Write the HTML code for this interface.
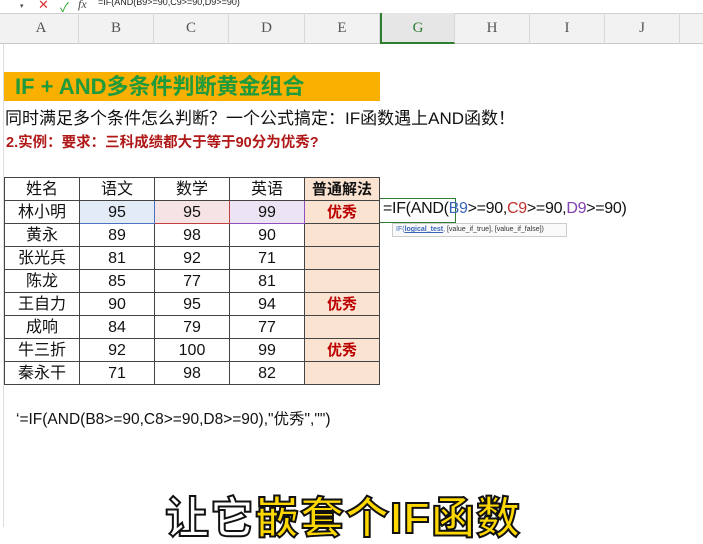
<!DOCTYPE html>
<html><head><meta charset="utf-8"><style>
*{margin:0;padding:0;box-sizing:border-box}
body{width:703px;height:527px;overflow:hidden;background:#fff;position:relative;font-family:"Liberation Sans","Noto Sans CJK SC",sans-serif}
.abs{position:absolute}
.hdr{top:13px;height:31px;background:#f2f2f2;border-top:1px solid #cfcfcf;border-bottom:1px solid #c8c8c8;left:0;width:703px}
.col{position:absolute;top:13px;height:31px;line-height:31px;text-align:center;font-family:"Liberation Serif",serif;font-size:15px;color:#555;border-right:1px solid #d8d8d8}
table{position:absolute;left:4px;top:177px;border-collapse:collapse;table-layout:fixed}
tr{height:23px}
td{width:75px;height:23px;line-height:21px;border:1px solid #444;text-align:center;font-size:16px;color:#111;padding:0;overflow:hidden}
td.e{background:#fbe3d2;color:#b00;font-weight:bold;font-size:15px}
</style></head><body>
<div class="abs" style="left:0;top:0;width:703px;height:12px;background:#fff"></div>
<div class="abs" style="left:20px;top:2px;font-size:7px;color:#444">▾</div>
<div class="abs" style="left:38px;top:-3px;font-size:13px;color:#d33">✕</div>
<div class="abs" style="left:60px;top:-3px;font-size:13px;color:#3a3">✓</div>
<div class="abs" style="left:78px;top:-3px;font-size:12px;font-style:italic;font-family:'Liberation Serif',serif;color:#444">fx</div>
<div class="abs" style="left:98px;top:-3px;font-size:9px;color:#222">=IF(AND(B9&gt;=90,C9&gt;=90,D9&gt;=90)</div>
<div class="abs hdr"></div>
<div class="col" style="left:4px;width:75px">A</div>
<div class="col" style="left:79px;width:75px">B</div>
<div class="col" style="left:154px;width:75px">C</div>
<div class="col" style="left:229px;width:76px">D</div>
<div class="col" style="left:305px;width:75px">E</div>
<div class="col" style="left:380px;width:75px;background:#e6e6e6;border-left:2px solid #2e7d32;border-bottom:2px solid #2e7d32;color:#2e7d32">G</div>
<div class="col" style="left:455px;width:75px">H</div>
<div class="col" style="left:530px;width:75px">I</div>
<div class="col" style="left:605px;width:75px">J</div>
<div class="abs" style="left:3px;top:44px;width:1px;height:483px;background:#ddd"></div>

<div class="abs" style="left:4px;top:72px;width:376px;height:29px;background:#f9b000;color:#1f9a3c;font-weight:bold;font-size:22px;line-height:29px;padding-left:11px">IF + AND多条件判断黄金组合</div>
<div class="abs" style="left:5px;top:104px;font-size:17px;color:#111;white-space:nowrap">同时满足多个条件怎么判断？一个公式搞定：IF函数遇上AND函数！</div>
<div class="abs" style="left:6px;top:131px;font-size:14.5px;color:#b01818;font-weight:bold;white-space:nowrap">2.实例：要求：三科成绩都大于等于90分为优秀?</div>

<table>
<tr><td>姓名</td><td>语文</td><td>数学</td><td>英语</td><td class="e" style="color:#111">普通解法</td></tr>
<tr><td>林小明</td><td style="background:#e3ebf7;border:1px solid #4a72c0">95</td><td style="background:#f6e3e3;border:1px solid #c04040">95</td><td style="background:#ece4f4;border:1px solid #9050c0">99</td><td class="e">优秀</td></tr>
<tr><td>黄永</td><td>89</td><td>98</td><td>90</td><td class="e"></td></tr>
<tr><td>张光兵</td><td>81</td><td>92</td><td>71</td><td class="e"></td></tr>
<tr><td>陈龙</td><td>85</td><td>77</td><td>81</td><td class="e"></td></tr>
<tr><td>王自力</td><td>90</td><td>95</td><td>94</td><td class="e">优秀</td></tr>
<tr><td>成响</td><td>84</td><td>79</td><td>77</td><td class="e"></td></tr>
<tr><td>牛三折</td><td>92</td><td>100</td><td>99</td><td class="e">优秀</td></tr>
<tr><td>秦永干</td><td>71</td><td>98</td><td>82</td><td class="e"></td></tr>
</table>
<div class="abs" style="left:380px;top:198px;width:76px;height:25px;border:1px solid #2e7d32;border-left:none"></div>
<div class="abs" style="left:383px;top:200px;font-size:16px;color:#111;white-space:nowrap;letter-spacing:-0.3px">=IF(AND(<span style="color:#3a64b8">B9</span>&gt;=90,<span style="color:#c03030">C9</span>&gt;=90,<span style="color:#8040b0">D9</span>&gt;=90)</div>
<div class="abs" style="left:392px;top:223px;width:175px;height:14px;border:1px solid #ccc;background:#fafafa;font-size:7px;line-height:12px;padding-left:3px;color:#333;white-space:nowrap"><span style="color:#3a64b8">IF(<b><u>logical_test</u></b>,</span> [value_if_true], [value_if_false])</div>
<div class="abs" style="left:16px;top:407px;font-size:15.5px;color:#111;white-space:nowrap">‘=IF(AND(B8&gt;=90,C8&gt;=90,D8&gt;=90),"优秀","")</div>
<div class="abs" style="left:165px;top:494px;font-size:44px;font-weight:bold;line-height:50px;white-space:nowrap;letter-spacing:1px;-webkit-text-stroke:2px #111"><span style="color:#fff">让它</span><span style="color:#ffd800">嵌套个IF函数</span></div>
</body></html>
